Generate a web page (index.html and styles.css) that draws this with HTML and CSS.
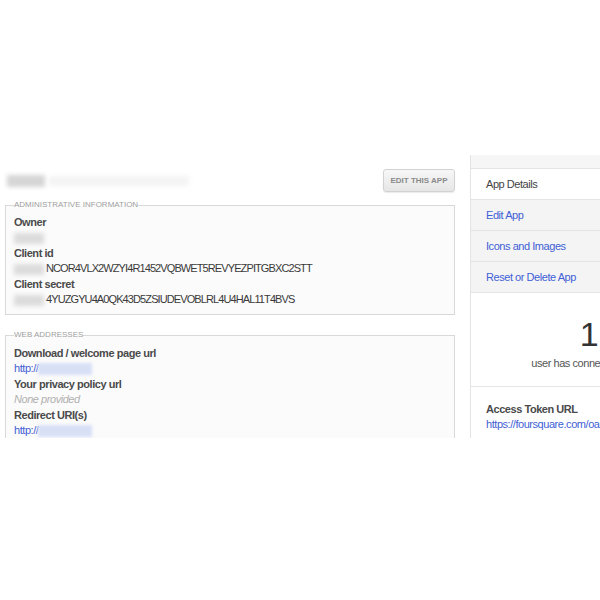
FILE: index.html
```html
<!DOCTYPE html>
<html lang="en">
<head>
  <meta charset="UTF-8">
  <title>App Details</title>
  <link rel="stylesheet" href="styles.css">
</head>
<body>
  <div class="shot">
    <div class="main">
      <div class="page-head">
        <div class="app-name"><span class="blur title-blur"></span><span class="blur title-ghost"></span></div>
        <button class="edit-btn">Edit this app</button>
      </div>

      <fieldset class="panel">
        <legend>Administrative information</legend>
        <div class="field">
          <div class="label">Owner</div>
          <div class="value"><span class="blur name-blur"></span></div>
        </div>
        <div class="field">
          <div class="label">Client id</div>
          <div class="value key"><span class="blur key-blur"></span>NCOR4VLX2WZYI4R1452VQBWET5REVYEZPITGBXC2STT</div>
        </div>
        <div class="field">
          <div class="label">Client secret</div>
          <div class="value key"><span class="blur key-blur"></span>4YUZGYU4A0QK43D5ZSIUDEVOBLRL4U4HAL11T4BVS</div>
        </div>
      </fieldset>

      <fieldset class="panel web">
        <legend>Web addresses</legend>
        <div class="field">
          <div class="label">Download / welcome page url</div>
          <div class="value"><a href="#">http://<span class="blur url-blur"></span></a></div>
        </div>
        <div class="field">
          <div class="label">Your privacy policy url</div>
          <div class="value none">None provided</div>
        </div>
        <div class="field">
          <div class="label">Redirect URI(s)</div>
          <div class="value"><a href="#">http://<span class="blur url-blur"></span></a></div>
        </div>
      </fieldset>
    </div>

    <div class="sidebar">
      <div class="side-top"></div>
      <ul class="side-nav">
        <li class="current">App Details</li>
        <li><a href="#">Edit App</a></li>
        <li><a href="#">Icons and Images</a></li>
        <li><a href="#">Reset or Delete App</a></li>
      </ul>
      <div class="counter">
        <div class="count">1</div>
        <div class="count-text">user has connected so far</div>
      </div>
      <div class="side-info">
        <div class="label">Access Token URL</div>
        <a href="#">https://foursquare.com/oauth2/access_token</a>
      </div>
    </div>
  </div>
</body>
</html>
```

FILE: styles.css
```css
/* Base styling */
body {
  margin: 0;
  background: #fff;
  font-family: "Liberation Sans", Arial, sans-serif;
  font-size: 11px;
  letter-spacing: -0.45px;
  color: #3a3a3a;
}
a {
  color: #3f5fd6;
  text-decoration: none;
}

/* the cropped screenshot area */
.shot {
  margin-top: 155px;
  height: 283px;
  overflow: hidden;
  display: flex;
  gap: 15px;
  padding-left: 5px;
}
.main {
  width: 450px;
  flex: none;
}
.page-head {
  display: flex;
  justify-content: space-between;
  align-items: center;
  padding-top: 14px;
  margin-bottom: 8px;
}
.app-name {
  display: flex;
  align-items: center;
  height: 23px;
}
.blur {
  display: inline-block;
  vertical-align: middle;
  filter: blur(2px);
}
.title-blur {
  width: 38px;
  height: 12px;
  background: #d6d6d6;
  margin-left: 2px;
}
.title-ghost {
  width: 140px;
  height: 10px;
  background: #f4f4f4;
  margin-left: 4px;
}
.edit-btn {
  width: 72px;
  height: 23px;
  padding: 0;
  font-family: "Liberation Sans", Arial, sans-serif;
  font-size: 8px;
  font-weight: bold;
  letter-spacing: 0;
  text-transform: uppercase;
  color: #8a8a8a;
  background: linear-gradient(#f7f7f7, #e6e6e6);
  border: 1px solid #d2d2d2;
  border-radius: 3px;
  box-shadow: 0 1px 1px rgba(0, 0, 0, 0.08);
}

/* info panels */
.panel {
  margin: 0 0 15px;
  padding: 5px 8px 7px;
  min-width: 0;
  background: #fbfbfb;
  border: 1px solid #d9d9d9;
}
.panel legend {
  padding: 0;
  font-size: 8px;
  line-height: 10px;
  letter-spacing: 0;
  text-transform: uppercase;
  color: #a0a0a0;
}
.web {
  padding-top: 6px;
}
.field {
  margin-bottom: 1px;
}
.field:last-child .value {
  line-height: 14px;
}
.web .field {
  margin-bottom: 2px;
}
.label {
  font-weight: bold;
  color: #4a4a4a;
  line-height: 15px;
}
.value {
  line-height: 15px;
  white-space: nowrap;
}
.key {
  letter-spacing: -0.9px;
}
.web .label, .web .value {
  line-height: 14.5px;
}
.name-blur {
  width: 30px;
  height: 11px;
  background: #dcdcdc;
}
.key-blur {
  width: 30px;
  height: 11px;
  background: #dcdcdc;
  margin-right: 2px;
}
.url-blur {
  width: 54px;
  height: 12px;
  background: #d8e0f6;
  filter: blur(1.5px);
}
.none {
  font-style: italic;
  color: #b0b0b0;
}

/* right column */
.sidebar {
  width: 236px;
  flex: none;
  border-left: 1px solid #e4e4e4;
  background: #fff;
}
.side-top {
  height: 13px;
  background: #f6f6f6;
  border-bottom: 1px solid #e4e4e4;
}
.side-nav {
  list-style: none;
  margin: 0;
  padding: 0;
}
.side-nav li {
  height: 30px;
  line-height: 30px;
  padding-left: 15px;
  background: #f4f4f4;
  border-bottom: 1px solid #e4e4e4;
}
.side-nav li.current {
  background: #fff;
  color: #444;
}
.counter {
  height: 93px;
  text-align: center;
  border-bottom: 1px solid #e4e4e4;
}
.count {
  padding-top: 22px;
  font-size: 34px;
  line-height: 38px;
  color: #333;
}
.count-text {
  margin-top: 4px;
  color: #555;
}
.side-info {
  padding: 15px;
  line-height: 15px;
}
```
